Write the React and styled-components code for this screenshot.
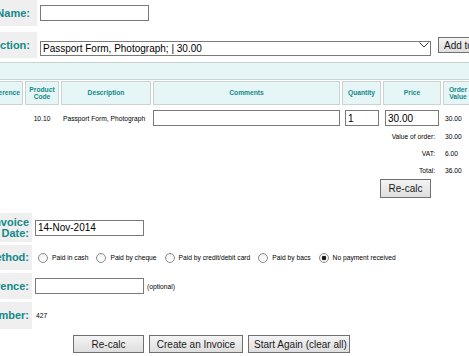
import React from "react";
import styled, { createGlobalStyle } from "styled-components";

const GlobalStyle = createGlobalStyle`
  html, body {
    margin: 0;
    padding: 0;
    overflow: hidden;
    background: #fff;
  }
  body {
    font-family: "Liberation Sans", Arial, sans-serif;
    color: #000;
  }
`;

const TEAL = "#14898a";
const COLUMNS = "123px 34px 90px 187px 39px 58px 30px";

const Page = styled.div`
  width: 700px;
  margin-left: -100px;
`;

const FormSection = styled.div`
  display: flex;
  flex-direction: column;
  gap: ${p => p.$gap}px;
  margin-top: ${p => p.$mt || 0}px;
`;

const FormRow = styled.div`
  display: flex;
  align-items: center;
  gap: 3px;
`;

const Label = styled.div`
  box-sizing: border-box;
  width: ${p => p.$w}px;
  height: ${p => p.$h}px;
  padding-right: ${p => p.$pad}px;
  background: #efefef;
  color: ${TEAL};
  font-weight: bold;
  font-size: 11px;
  line-height: 11px;
  display: flex;
  align-items: center;
  justify-content: flex-end;
  text-align: right;
  flex-shrink: 0;
`;

const TextInput = styled.input`
  box-sizing: border-box;
  width: ${p => p.$w}px;
  height: 16px;
  margin: ${p => p.$m || "0"};
  padding: 0 2px;
  border: 1px solid #7a7a7a;
  border-radius: 0;
  font-family: inherit;
  font-size: 10px;
  color: #000;
  background: #fff;
  outline: none;
`;

const SelectWrap = styled.div`
  position: relative;
  width: 391px;
  height: 15px;
`;

const Select = styled.select`
  box-sizing: border-box;
  width: 100%;
  height: 100%;
  appearance: none;
  border: 1px solid #7a7a7a;
  border-radius: 0;
  padding: 0 2px;
  font-family: inherit;
  font-size: 10px;
  color: #000;
  background: #fff;
  outline: none;
`;

const Chevron = styled.svg`
  position: absolute;
  right: 2px;
  top: 4px;
  pointer-events: none;
`;

const Button = styled.button`
  box-sizing: border-box;
  width: ${p => (p.$w ? `${p.$w}px` : "auto")};
  height: ${p => p.$h || 18}px;
  margin: ${p => p.$m || "0"};
  padding: 0 5px;
  border: 1px solid #707070;
  border-radius: 0;
  background: linear-gradient(#f4f4f4, #dedede);
  font-family: inherit;
  font-size: 10px;
  color: #1a1a1a;
  white-space: nowrap;
  flex-shrink: 0;
`;

const Band = styled.div`
  box-sizing: border-box;
  width: 590px;
  height: 18px;
  margin-top: 4px;
  background: #e6f6f6;
  border: 1px solid #cbd2d2;
`;

const TableRow = styled.div`
  display: grid;
  grid-template-columns: ${COLUMNS};
  column-gap: 2px;
  height: ${p => p.$h}px;
  margin-top: ${p => p.$mt || 0}px;
  align-items: center;
`;

const HeadCell = styled.div`
  box-sizing: border-box;
  height: 100%;
  background: #e6f6f6;
  border: 1px solid #cbd2d2;
  color: ${TEAL};
  font-weight: bold;
  font-size: 6.7px;
  line-height: 7.5px;
  display: flex;
  align-items: center;
  justify-content: ${p => (p.$right ? "flex-end" : "center")};
  padding-right: ${p => (p.$right ? 2 : 0)}px;
  text-align: center;
`;

const Cell = styled.div`
  font-size: 6.7px;
  color: #000;
  padding-left: ${p => p.$pl || 0}px;
  padding-right: ${p => p.$pr || 0}px;
  grid-column: ${p => p.$span || "auto"};
  display: flex;
  justify-content: ${p =>
    p.$align === "center" ? "center" : p.$align === "right" ? "flex-end" : "flex-start"};
  white-space: nowrap;
`;

const SmallText = styled.span`
  font-size: 6.7px;
  color: #000;
  white-space: nowrap;
`;

const RadioGroup = styled.div`
  display: flex;
  align-items: center;
  margin-left: 3px;
`;

const RadioItem = styled.label`
  display: flex;
  align-items: center;
  gap: 4px;
  margin-right: 8px;
`;

const Radio = styled.input`
  appearance: none;
  box-sizing: border-box;
  width: 10px;
  height: 10px;
  margin: 0;
  border: 1px solid #8a8a8a;
  border-radius: 50%;
  background: linear-gradient(#f0f0f0, #ffffff);
  &:checked {
    background: radial-gradient(circle, #1a1a1a 0 2px, #f6f6f6 2.6px);
  }
`;

const ButtonBar = styled.div`
  display: flex;
  gap: 5px;
  margin: 6px 0 0 173px;
`;

const payments = [
  "Paid in cash",
  "Paid by cheque",
  "Paid by credit/debit card",
  "Paid by bacs",
  "No payment received",
];

const totals = [
  ["Value of order:", "30.00"],
  ["VAT:", "6.00"],
  ["Total:", "36.00"],
];

export default function App() {
  return (
    <>
      <GlobalStyle />
      <Page>
        <FormSection $gap={6}>
          <FormRow>
            <Label $w={137} $h={26} $pad={7}>Customer Name:</Label>
            <TextInput $w={109} />
          </FormRow>
          <FormRow>
            <Label $w={137} $h={26} $pad={7}>Product Selection:</Label>
            <SelectWrap>
              <Select defaultValue="pp">
                <option value="pp">Passport Form, Photograph; | 30.00</option>
              </Select>
              <Chevron width="10" height="6" viewBox="0 0 10 6">
                <path d="M0.5 0.5 L5 5 L9.5 0.5" fill="none" stroke="#333" strokeWidth="1" />
              </Chevron>
            </SelectWrap>
            <Button $h={16} $m="0 0 0 4px">Add to order</Button>
          </FormRow>
        </FormSection>

        <Band />

        <TableRow $h={24} $mt={1}>
          <HeadCell $right>Reference</HeadCell>
          <HeadCell>Product<br />Code</HeadCell>
          <HeadCell>Description</HeadCell>
          <HeadCell>Comments</HeadCell>
          <HeadCell>Quantity</HeadCell>
          <HeadCell>Price</HeadCell>
          <HeadCell>Order<br />Value</HeadCell>
        </TableRow>

        <TableRow $h={20} $mt={3}>
          <Cell />
          <Cell $align="center">10.10</Cell>
          <Cell $pl={2}>Passport Form, Photograph</Cell>
          <TextInput $w={187} />
          <TextInput $w={34} $m="0 0 0 3px" defaultValue="1" />
          <TextInput $w={54} $m="0 0 0 2px" defaultValue="30.00" />
          <Cell $pl={2}>30.00</Cell>
        </TableRow>

        {totals.map(([label, value]) => (
          <TableRow $h={17} key={label}>
            <Cell $span="1 / 7" $align="right" $pr={6}>{label}</Cell>
            <Cell $pl={2}>{value}</Cell>
          </TableRow>
        ))}

        <TableRow $h={19}>
          <Cell $span="1 / 7" $align="right" $pr={10}>
            <Button $w={51} $h={19}>Re-calc</Button>
          </Cell>
        </TableRow>

        <FormSection $gap={3} $mt={15}>
          <FormRow>
            <Label $w={132} $h={29} $pad={3}>Invoice<br />Date:</Label>
            <TextInput $w={109} defaultValue="14-Nov-2014" />
          </FormRow>
          <FormRow>
            <Label $w={132} $h={25} $pad={3}>Payment Method:</Label>
            <RadioGroup>
              {payments.map(p => (
                <RadioItem key={p}>
                  <Radio type="radio" name="pay" defaultChecked={p === "No payment received"} />
                  <SmallText>{p}</SmallText>
                </RadioItem>
              ))}
            </RadioGroup>
          </FormRow>
          <FormRow>
            <Label $w={132} $h={26} $pad={3}>Reference:</Label>
            <TextInput $w={109} />
            <SmallText>(optional)</SmallText>
          </FormRow>
          <FormRow>
            <Label $w={132} $h={27} $pad={3}>Invoice Number:</Label>
            <SmallText style={{ marginLeft: 1 }}>427</SmallText>
          </FormRow>
        </FormSection>

        <ButtonBar>
          <Button $w={71}>Re-calc</Button>
          <Button $w={94}>Create an Invoice</Button>
          <Button $w={102}>Start Again (clear all)</Button>
        </ButtonBar>
      </Page>
    </>
  );
}
